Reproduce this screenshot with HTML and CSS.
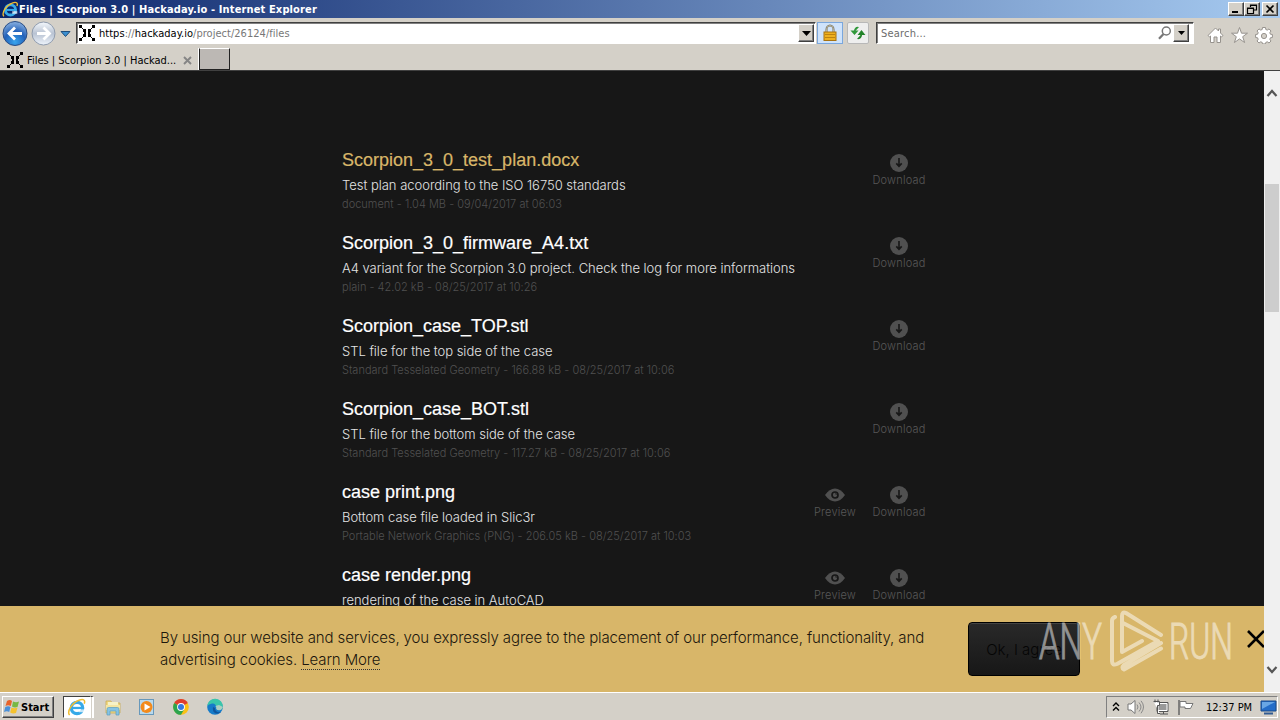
FILE: index.html
```html
<!DOCTYPE html>
<html lang="en">
<head>
  <meta charset="utf-8">
  <title>Files | Scorpion 3.0 | Hackaday.io</title>
  <link rel="stylesheet" href="styles.css">
</head>
<body>
  <svg width="0" height="0" class="defs">
    <symbol id="ie" viewBox="0 0 20 20">
      <circle cx="10" cy="10.5" r="6" fill="none" stroke="#36a9e8" stroke-width="3.4"/>
      <path d="M5 10.5h10" stroke="#36a9e8" stroke-width="2.4"/>
      <path d="M12 12h6v3h-6z" fill="#fff" opacity=".7"/>
      <path d="M2.2 18C-1 14 5 5 12 2.4c5-2 7 0 5.6 3.6" fill="none" stroke="#f0bd32" stroke-width="1.6"/>
    </symbol>
    <symbol id="hack" viewBox="0 0 16 16">
      <path d="M0 0h3v3H0zM13 0h3v3h-3zM0 13h3v3H0zM13 13h3v3h-3zM4 4h3v3H4zM9 4h3v3H9zM4 9h3v3H4zM9 9h3v3H9zM5 7h2v2H5zM9 7h2v2H9zM3 3h1v1H3zM12 3h1v1h-1zM3 12h1v1H3zM12 12h1v1h-1z"/>
    </symbol>
    <symbol id="download" viewBox="0 0 18 18">
      <circle cx="9" cy="9" r="9" fill="#505050"/>
      <path d="M9 4v8M6.3 9.4L9 12.3l2.7-2.9" fill="none" stroke="#171717" stroke-width="1.6"/>
    </symbol>
    <symbol id="eye" viewBox="0 0 20 14">
      <path d="M0 7Q4.5.5 10 .5T20 7Q15.500 13.500 10 13.500T0 7z" fill="#505050"/>
      <circle cx="10" cy="7" r="3" fill="none" stroke="#171717" stroke-width="1.7"/>
      <path d="M10 5l2 1-1 1z" fill="#171717"/>
    </symbol>
  </svg>

  <header class="titlebar">
    <svg class="title-icon"><use href="#ie"/></svg>
    <span class="title-text">Files | Scorpion 3.0 | Hackaday.io - Internet Explorer</span>
    <div class="win-buttons">
      <button><svg width="12" height="10"><path d="M2 7h6v2H2z"/></svg></button>
      <button><svg width="12" height="10"><path d="M4.500 3V1h6v5H8M4 1.500h7M1.500 4h6v5.500h-6zM1 4.500h7" fill="none" stroke="#000" stroke-width="1.200"/></svg></button>
      <button class="close"><svg width="12" height="10"><path d="M2.500 1.500l7 7M9.500 1.500l-7 7" stroke="#000" stroke-width="1.700"/></svg></button>
    </div>
  </header>

  <nav class="navbar">
    <svg class="history" width="74" height="30" viewBox="0 0 74 30">
      <defs>
        <radialGradient id="back" cx=".5" cy=".85" r=".8"><stop offset="0" stop-color="#38a5ee"/><stop offset=".55" stop-color="#2261b9"/><stop offset="1" stop-color="#7fa8dc"/></radialGradient>
        <linearGradient id="fwd" x2="0" y2="1"><stop offset="0" stop-color="#f4f8fc"/><stop offset=".5" stop-color="#b9c3d3"/><stop offset="1" stop-color="#eef4fb"/></linearGradient>
      </defs>
      <circle cx="15" cy="15.500" r="12" fill="url(#back)" stroke="#294d85"/>
      <path d="M22 15.500H9M15 9.500l-6 6 6 6" fill="none" stroke="#fff" stroke-width="2.800"/>
      <circle cx="43.500" cy="15.500" r="11.500" fill="url(#fwd)" stroke="#8f9bad"/>
      <path d="M37 15.500h12M43.500 9.500l6 6-6 6" fill="none" stroke="#fff" stroke-width="2.800"/>
      <path d="M61 13.500h9l-4.500 5z" fill="#3b8fd0" stroke="#1f4e7d"/>
    </svg>
    <div class="address">
      <svg class="favicon"><use href="#hack"/></svg>
      <span class="url"><b>https</b>://<b>hackaday.io</b>/project/26124/files</span>
      <button class="drop"><svg width="9" height="5"><path d="M0 0h9L4.500 5z"/></svg></button>
    </div>
    <div class="lock">
      <svg width="16" height="18" viewBox="0 0 16 18"><path d="M4.500 9V5.500a3.500 4 0 0 1 7 0V9" fill="none" stroke="#77715e" stroke-width="2"/><path d="M4.500 8V5.500a3.500 4 0 0 1 7 0V8" fill="none" stroke="#d8d2b8" stroke-width=".7"/><rect x="2" y="8" width="12" height="8.500" fill="#eeb01f" stroke="#a77210"/><path d="M3 10.500h10M3 13.500h10" stroke="#bd830f"/></svg>
    </div>
    <div class="refresh">
      <svg width="16" height="16" viewBox="0 0 16 16"><path d="M8.500 2.500Q4.500 2 4.500 7M1.800 6h5.400L4.500 9z" fill="#30983a" stroke="#30983a" stroke-width="1.200"/><path d="M7.500 13.500Q11.500 14 11.500 9M8.800 9.500h5.400L11.500 6z" fill="#228329" stroke="#228329" stroke-width="1.200"/></svg>
    </div>
    <div class="search">
      <span>Search...</span>
      <svg width="14" height="14" viewBox="0 0 14 14"><circle cx="8.300" cy="5" r="4" fill="none" stroke="#777" stroke-width="1.500"/><path d="M5.500 8L1 12.800" stroke="#777" stroke-width="2.200"/></svg>
      <button class="drop"><svg width="7" height="4"><path d="M0 0h7L3.500 4z"/></svg></button>
    </div>
    <svg class="tools" width="68" height="18" viewBox="0 0 68 18" fill="#fff" stroke="#96928d">
      <path d="M1 9.500L8.500 2l3 3V3h2v4L16 9.500l-1.500 1.300-1-.8v6.500H10V11H7v5.500H3.500V10l-1 .8z"/>
      <path d="M32.500 1.500l2 5.700h6l-4.800 3.500 1.900 5.800-5.100-3.600-5.100 3.600 1.900-5.800-4.800-3.500h6z"/>
      <path d="M55.500 1.500h3l.3 2 1.500.6 1.700-1.200L64 5l-1.200 1.700.6 1.500 2 .3v3l-2 .3-.6 1.500L64 15l-2 2-1.700-1.200-1.500.6-.3 1.500h-3l-.3-1.500-1.500-.6L52 17l-2-2 1.200-1.700-.6-1.500-2-.3v-3l2-.3.600-1.500L50 5l2-2.100 1.700 1.200 1.500-.6z"/>
      <circle cx="57" cy="10" r="2.600" fill="#d4d0c8"/>
    </svg>
  </nav>

  <div class="tabs">
    <div class="tab">
      <svg class="favicon"><use href="#hack"/></svg>
      <span>Files | Scorpion 3.0 | Hackad...</span>
      <svg width="9" height="9"><path d="M1 1l7 7M8 1L1 8" stroke="#858585" stroke-width="1.900"/></svg>
    </div>
    <div class="new-tab"></div>
  </div>

  <div class="viewport">
    <main class="page">
      <ul class="files">
        <li class="file active">
          <div class="info">
            <h3>Scorpion_3_0_test_plan.docx</h3>
            <p class="desc">Test plan acoording to the ISO 16750 standards</p>
            <p class="meta">document - 1.04 MB - 09/04/2017 at 06:03</p>
          </div>
          <a class="action"><svg class="dl"><use href="#download"/></svg>Download</a>
        </li>
        <li class="file">
          <div class="info">
            <h3>Scorpion_3_0_firmware_A4.txt</h3>
            <p class="desc">A4 variant for the Scorpion 3.0 project. Check the log for more informations</p>
            <p class="meta">plain - 42.02 kB - 08/25/2017 at 10:26</p>
          </div>
          <a class="action"><svg class="dl"><use href="#download"/></svg>Download</a>
        </li>
        <li class="file">
          <div class="info">
            <h3>Scorpion_case_TOP.stl</h3>
            <p class="desc">STL file for the top side of the case</p>
            <p class="meta">Standard Tesselated Geometry - 166.88 kB - 08/25/2017 at 10:06</p>
          </div>
          <a class="action"><svg class="dl"><use href="#download"/></svg>Download</a>
        </li>
        <li class="file">
          <div class="info">
            <h3>Scorpion_case_BOT.stl</h3>
            <p class="desc">STL file for the bottom side of the case</p>
            <p class="meta">Standard Tesselated Geometry - 117.27 kB - 08/25/2017 at 10:06</p>
          </div>
          <a class="action"><svg class="dl"><use href="#download"/></svg>Download</a>
        </li>
        <li class="file">
          <div class="info">
            <h3>case print.png</h3>
            <p class="desc">Bottom case file loaded in Slic3r</p>
            <p class="meta">Portable Network Graphics (PNG) - 206.05 kB - 08/25/2017 at 10:03</p>
          </div>
          <a class="action"><svg class="view"><use href="#eye"/></svg>Preview</a>
          <a class="action"><svg class="dl"><use href="#download"/></svg>Download</a>
        </li>
        <li class="file">
          <div class="info">
            <h3>case render.png</h3>
            <p class="desc">rendering of the case in AutoCAD</p>
          </div>
          <a class="action"><svg class="view"><use href="#eye"/></svg>Preview</a>
          <a class="action"><svg class="dl"><use href="#download"/></svg>Download</a>
        </li>
      </ul>

      <div class="cookies">
        <p>By using our website and services, you expressly agree to the placement of our performance, functionality, and<br>advertising cookies. <a>Learn More</a></p>
        <button class="agree">Ok, I agree</button>
        <svg class="dismiss" width="17" height="18"><path d="M1 1l16 16M17 1L1 17" stroke="#000" stroke-width="2.600"/></svg>
      </div>
    </main>
    <div class="scrollbar">
      <svg width="12" height="8"><path d="M1.500 7L6 2l4.500 5" fill="none" stroke="#555" stroke-width="2.200"/></svg>
      <div class="thumb"></div>
      <svg class="down" width="12" height="8"><path d="M1.500 1L6 6l4.500-5" fill="none" stroke="#555" stroke-width="2.200"/></svg>
    </div>
  </div>

  <footer class="taskbar">
    <button class="start">
      <svg width="16" height="16" viewBox="0 0 16 16"><path d="M3 2q3-2 5 0L6.800 7Q4 5.500 1.500 7z" fill="#e8632a"/><path d="M9 2.500q3 1.500 6 0L13.500 8q-3 1-5.500-.5z" fill="#77b843"/><path d="M1.300 8q3-1.500 5.200 0L5.200 13Q3 11.500 0 13z" fill="#4a90d9"/><path d="M7.500 8.500q3 1.500 6 0L12 14q-3 1-5.800-.5z" fill="#f5c22e"/></svg>
      Start
    </button>
    <div class="running"><svg width="20" height="19"><use href="#ie"/></svg></div>
    <div class="grip"></div>
    <div class="pinned">
      <svg width="18" height="18" viewBox="0 0 18 18"><path d="M2 3h5l1 2h8v10H2z" fill="#f1d982" stroke="#c9ab55" stroke-width=".8"/><path d="M4 4h10v4H4z" fill="#f7f2c6"/><path d="M2 7h14v5H2z" fill="#f4e5a2"/><path d="M3 17v-6q0-1.500 1.500-1.500h9Q15 9.500 15 11v6h-3v-4H6v4z" fill="#86c3e3" stroke="#599dc0" stroke-width=".7"/></svg>
      <svg width="18" height="18" viewBox="0 0 18 18"><rect x="1.500" y="1.500" width="14" height="15" fill="#b9d9ed" stroke="#6798bb"/><circle cx="8.500" cy="9" r="6" fill="#f38a1b"/><path d="M6.500 5.500v7l6-3.500z" fill="#fff"/></svg>
      <svg width="18" height="18" viewBox="0 0 18 18"><circle cx="9" cy="9" r="7.800" fill="#fbc116"/><path d="M9 9L2.200 5.100A7.800 7.800 0 0 1 15.800 5.100z" fill="#df3e2f"/><path d="M9 9L2.200 5.100A7.800 7.800 0 0 0 9 16.800l3-5z" fill="#2da44e"/><circle cx="9" cy="9" r="3.900" fill="#fff"/><circle cx="9" cy="9" r="3" fill="#3679e0"/></svg>
      <svg width="18" height="18" viewBox="0 0 18 18"><circle cx="9" cy="9" r="7.800" fill="#167bc9"/><path d="M1.200 8A7.800 7.800 0 0 1 16.800 9q0 3-3.500 3-3.300 0-2.800-2Q10 5 6 5.500 2.500 6 1.200 8z" fill="#39c6aa"/><path d="M7 9q-1 5 3 6.500 3 .5 5-1.500-6 1-6-4z" fill="#10559c"/><path d="M9.300 8q1.700 1.500.8 3 2 2 5 .7L17 9l-4-2z" fill="#d4d0c8" opacity=".75"/></svg>
    </div>
    <div class="tray">
      <svg width="8" height="10"><path d="M1 4l3-3 3 3M1 8.500l3-3 3 3" fill="none" stroke="#000" stroke-width="1.400"/></svg>
      <svg width="18" height="16" viewBox="0 0 18 16"><path d="M1 5h3l4-3.500v13L4 11H1z" fill="#fff" stroke="#777"/><path d="M10 5.500q2 2.500 0 5M12 3.500q4 4.500 0 9M14 1.800q5 6 0 12.500" fill="none" stroke="#888"/></svg>
      <svg width="18" height="16" viewBox="0 0 18 16"><path d="M5 3.500h11v9H5z" fill="#999" stroke="#555"/><path d="M6 4.500h9v7H6z" fill="none" stroke="#fff"/><path d="M8 15h8M11.500 13v2" stroke="#555"/><path d="M1.500 2.500h6v4H5.500v8H8" fill="#fff" stroke="#555"/><path d="M3 .5v3M6 .5v3" stroke="#555"/></svg>
      <svg width="17" height="16" viewBox="0 0 17 16"><path d="M2 1v15" stroke="#666" stroke-width="1.500"/><path d="M3 2.500h6v2h7l-2.500 5H8v-1.500H3z" fill="#fff" stroke="#777"/></svg>
      <span class="clock">12:37 PM</span>
      <svg width="17" height="15" viewBox="0 0 17 15"><path d="M1 1h15v10H1z" fill="#246dc8" stroke="#194a88"/><path d="M2 2h13L2 9z" fill="#69a7e5"/><path d="M4 13.500h9" stroke="#315b91" stroke-width="2"/></svg>
    </div>
  </footer>

  <!-- recording service mark, sits over the page -->
  <svg class="watermark" width="200" height="68" viewBox="0 0 200 68">
    <text x="1" y="52" textLength="63" lengthAdjust="spacingAndGlyphs">ANY</text>
    <text x="131" y="52" textLength="64" lengthAdjust="spacingAndGlyphs">RUN</text>
    <path class="mark" d="M123 28L88 6q-4-2-4 3v36l20-11M77 10q-3 1-3 4v40q0 5 5 3l41-23-35-18M123 36L86 58q-3 3 0 4.500l37-21"/>
  </svg>
</body>
</html>
```

FILE: styles.css
```css
* {
  box-sizing: border-box;
}

body {
  margin: 0;
  width: 1280px;
  height: 720px;
  overflow: hidden;
  display: flex;
  flex-direction: column;
  background: #d4d0c8;
  font-family: "DejaVu Sans Condensed", "DejaVu Sans", sans-serif;
  font-size: 11px;
  color: #000;
}

svg {
  display: block;
  flex: none;
}

span {
  white-space: nowrap;
}

button {
  font: inherit;
  padding: 0;
  margin: 0;
  background: #d4d0c8;
  border: 1px solid;
  border-color: #fff #404040 #404040 #fff;
  box-shadow: inset -1px -1px #808080;
}

.defs {
  position: absolute;
}

/* browser chrome */
.titlebar {
  height: 18px;
  flex: none;
  display: flex;
  align-items: center;
  padding: 0 2px;
  background: linear-gradient(90deg, #0a246a, #a6caf0);
  color: #fff;
}

.title-icon {
  width: 17px;
  height: 17px;
}

.title-text {
  font-weight: bold;
  letter-spacing: 0.13px;
}

.win-buttons {
  margin-left: auto;
  display: flex;
}

.win-buttons button {
  width: 16px;
  height: 14px;
  display: flex;
  justify-content: center;
  align-items: center;
}

.win-buttons .close {
  margin-left: 2px;
}

.navbar {
  height: 30px;
  flex: none;
  display: flex;
  align-items: center;
}

.history {
  margin-right: 2px;
}

.address,
.search {
  height: 22px;
  display: flex;
  align-items: center;
  background: #fff;
  border: 1px solid;
  border-color: #404040 #fff #fff #404040;
  box-shadow: inset 1px 1px #808080;
}

.address {
  width: 740px;
  padding: 0 1px 0 2px;
}

.favicon {
  width: 16px;
  height: 16px;
}

.url {
  margin-left: 4px;
  padding-top: 1px;
  letter-spacing: 0.03px;
  color: #777;
}

.url b {
  font-weight: normal;
  color: #000;
}

.drop {
  width: 16px;
  height: 18px;
  margin-left: auto;
  display: flex;
  align-items: center;
  justify-content: center;
}

.lock {
  width: 26px;
  height: 22px;
  margin-left: 1px;
  display: grid;
  place-items: center;
  background: #cfe3fb;
  border: 1px solid #7aa7dd;
}

.refresh {
  width: 22px;
  height: 22px;
  margin-left: 4px;
  display: grid;
  place-items: center;
  background: #eee;
  border: 1px solid #b8b8b8;
  border-radius: 2px;
}

.search {
  width: 318px;
  margin-left: 7px;
  padding: 0 4px;
  color: #6c6c6c;
}

.search span {
  padding-top: 1px;
  letter-spacing: 0.2px;
}

.search > svg {
  margin-left: auto;
}

.search .drop {
  margin-left: 1px;
}

.tools {
  margin: 3px 0 0 13px;
}

.tabs {
  height: 23px;
  flex: none;
  display: flex;
  border-bottom: 1px solid #404040;
}

.tab {
  width: 199px;
  display: flex;
  align-items: center;
  padding: 2px 0 0 7px;
  border-right: 1px solid #fff;
}

.tab span {
  width: 156px;
  margin-left: 4px;
}

.new-tab {
  width: 31px;
  height: 22px;
  background: #bcb8b4;
  border: 1px solid;
  border-color: #fff #222 #222 #222;
}

/* project page */
.viewport {
  flex: 1;
  min-height: 0;
  display: flex;
}

.page {
  width: 1264px;
  display: flex;
  flex-direction: column;
  background: #171717;
  font-family: Inter, Lato, sans-serif;
  font-weight: 300;
}

.files {
  list-style: none;
  margin: 0;
  padding: 78px 333px 0 342px;
  height: 535px;
  overflow: hidden;
}

.file {
  height: 83px;
  display: flex;
}

.info {
  flex: 1;
  white-space: nowrap;
}

.file h3 {
  margin: 0;
  font: 18px/22px "Liberation Sans", Arial, sans-serif;
  -webkit-text-stroke: 0.2px;
  color: #fff;
}

.file.active h3 {
  color: #d8b669;
}

.desc {
  margin: 4px 0 0;
  font-size: 13px;
  line-height: 20px;
  letter-spacing: -0.02px;
  color: #e4e4e4;
}

.meta {
  margin: 1px 0 0;
  font-size: 11px;
  line-height: 17px;
  letter-spacing: 0.02px;
  color: #505050;
}

.action {
  width: 64px;
  padding-top: 5px;
  display: flex;
  flex-direction: column;
  align-items: center;
  font-size: 11px;
  line-height: 17px;
  letter-spacing: 0.2px;
  color: #575757;
}

.dl {
  width: 18px;
  height: 18px;
}

.view {
  width: 20px;
  height: 14px;
  margin: 2px 0;
}

.cookies {
  height: 86px;
  flex: none;
  display: flex;
  padding-left: 160px;
  background: #d8b669;
  color: #1c170d;
}

.cookies p {
  width: 808px;
  margin: 21px 0 0;
  font-size: 15px;
  line-height: 22px;
  letter-spacing: -0.11px;
  white-space: nowrap;
}

.cookies a {
  border-bottom: 1px dotted #333;
}

.agree {
  width: 112px;
  height: 54px;
  margin-top: 16px;
  border: 1px solid #000;
  border-radius: 4px;
  background: linear-gradient(#292929, #171717);
  box-shadow: inset 0 1px #444;
  font-size: 15px;
  color: #050505;
}

.dismiss {
  margin: 24px 0 0 auto;
}

.scrollbar {
  width: 16px;
  display: flex;
  flex-direction: column;
  align-items: center;
  padding: 18px 0;
  background: #f0f0f0;
}

.thumb {
  width: 14px;
  height: 128px;
  margin-top: 87px;
  background: #cdcdcd;
}

.scrollbar .down {
  margin-top: auto;
}

/* taskbar */
.taskbar {
  height: 28px;
  flex: none;
  display: flex;
  align-items: center;
  padding: 1px 2px 0;
  border-top: 1px solid #fff;
}

.start {
  width: 52px;
  height: 22px;
  display: flex;
  align-items: center;
  gap: 1px;
  padding-left: 1px;
  font-weight: bold;
}

.running {
  width: 28px;
  height: 22px;
  margin-left: 9px;
  display: grid;
  place-items: center;
  background: #fff;
  border: 1px solid;
  border-color: #404040 #fff #fff #404040;
}

.grip {
  width: 3px;
  height: 22px;
  border-top: 1px solid #404040;
  border-right: 2px solid #fff;
}

.pinned {
  display: flex;
  gap: 16px;
  margin-left: 10px;
}

.tray {
  width: 172px;
  height: 22px;
  margin-left: auto;
  display: flex;
  align-items: center;
  padding-left: 5px;
  border: 1px solid;
  border-color: #808080 #fff #fff #808080;
}

.tray svg + svg {
  margin-left: 7px;
}

.clock {
  margin: 0 8px 0 12px;
}

.watermark {
  position: absolute;
  left: 1038px;
  top: 607px;
  fill: #fff;
  stroke: #fff;
  opacity: 0.5;
  font: 300 50px Roboto, sans-serif;
}

.watermark .mark {
  fill: none;
  stroke-width: 4px;
  stroke-linecap: round;
  stroke-linejoin: round;
}
```
